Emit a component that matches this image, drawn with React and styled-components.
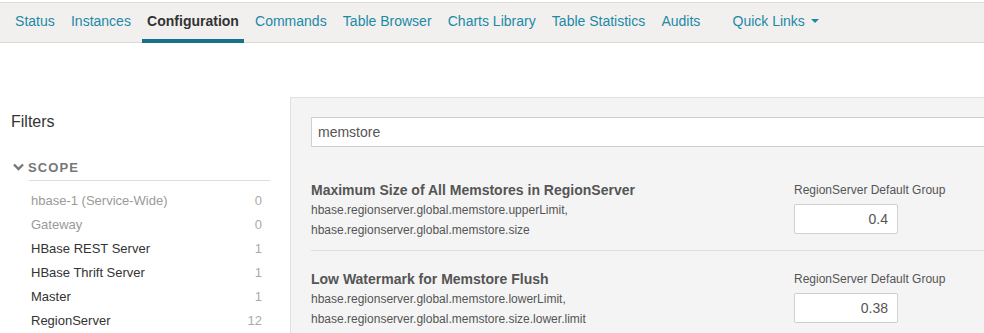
import React from "react";
import styled, { createGlobalStyle } from "styled-components";

const Global = createGlobalStyle`
  html, body { margin: 0; padding: 0; background: #fff; }
  body { font-family: "Liberation Sans", Arial, sans-serif; color: #333; }
  * { box-sizing: border-box; }
`;

const Page = styled.div`
  width: 984px;
  height: 333px;
  overflow: hidden;
  padding-top: 2px;
`;

const Nav = styled.nav`
  display: flex;
  align-items: stretch;
  height: 41px;
  background: #f2f0ef;
  border-top: 1px solid #dedcdb;
  border-bottom: 1px solid #dcdad9;
  padding-left: 7px;
`;

const Tab = styled.a`
  position: relative;
  display: flex;
  align-items: center;
  gap: 6px;
  padding: 0 8.1px 3px;
  margin-left: ${(p) => p.$offset || 0}px;
  font-size: 14px;
  color: ${(p) => (p.$active ? "#333" : "#1a8aa6")};
  font-weight: ${(p) => (p.$active ? 700 : 400)};
  text-decoration: none;
  white-space: nowrap;
  &::after {
    content: "";
    display: ${(p) => (p.$active ? "block" : "none")};
    position: absolute;
    left: 3px;
    right: 3px;
    bottom: -1px;
    height: 4px;
    background: #17718a;
  }
`;

const Body = styled.div`
  display: flex;
  margin-top: 54px;
`;

const Sidebar = styled.aside`
  width: 290px;
  flex: none;
  padding: 13px 20px 0 11px;
`;

const FiltersTitle = styled.h3`
  margin: 0;
  font-size: 16px;
  font-weight: 400;
  color: #333;
  line-height: 24px;
`;

const ScopeHeader = styled.div`
  display: flex;
  align-items: center;
  gap: 4px;
  margin-top: 21px;
  height: 24px;
  font-size: 13px;
  font-weight: 700;
  letter-spacing: 1.1px;
  color: #777;
  padding-left: 2px;
`;

const ScopeList = styled.ul`
  list-style: none;
  margin: 1px 0 0 18px;
  padding: 7px 0 0;
  border-top: 1px solid #ddd;
  width: 241px;
`;

const ScopeItem = styled.li`
  display: flex;
  justify-content: space-between;
  align-items: center;
  height: 24px;
  padding: 0 8px 0 2px;
  font-size: 13px;
  color: ${(p) => (p.$muted ? "#9a9a9a" : "#333")};
`;

const Count = styled.span`
  color: #aaa;
  font-size: 13px;
`;

const Main = styled.main`
  flex: 1;
  background: #f4f4f4;
  border-left: 1px solid #e0e0e0;
  border-top: 1px solid #e0e0e0;
  padding: 19px 0 0 20px;
  min-height: 240px;
`;

const Search = styled.div`
  height: 30px;
  background: #fff;
  border: 1px solid #d0d0d0;
  border-right: none;
  display: flex;
  align-items: center;
  padding-left: 6px;
  font-size: 14px;
  color: #555;
`;

const Rows = styled.div`
  margin-top: 15px;
`;

const Row = styled.div`
  display: flex;
  padding: 18px 0 10px;
  border-bottom: 1px solid #dedede;
`;

const Info = styled.div`
  width: 483px;
  flex: none;
`;

const Title = styled.div`
  font-size: 14px;
  font-weight: 700;
  color: #555;
  line-height: 20px;
`;

const Key = styled.div`
  font-size: 12px;
  color: #555;
  line-height: 20px;
`;

const GroupCol = styled.div`
  display: flex;
  flex-direction: column;
  align-items: flex-start;
`;

const GroupLabel = styled.div`
  font-size: 12px;
  color: #555;
  line-height: 20px;
`;

const ValueBox = styled.div`
  margin-top: 4px;
  width: 104px;
  height: 30px;
  background: #fff;
  border: 1px solid #d0d0d0;
  border-radius: 2px;
  display: flex;
  align-items: center;
  justify-content: flex-end;
  padding-right: 9px;
  font-size: 14px;
  color: #555;
`;

const tabs = [
  "Status",
  "Instances",
  "Configuration",
  "Commands",
  "Table Browser",
  "Charts Library",
  "Table Statistics",
  "Audits",
];

const scopes = [
  ["hbase-1 (Service-Wide)", 0, true],
  ["Gateway", 0, true],
  ["HBase REST Server", 1],
  ["HBase Thrift Server", 1],
  ["Master", 1],
  ["RegionServer", 12],
];

const configs = [
  {
    title: "Maximum Size of All Memstores in RegionServer",
    keys: [
      "hbase.regionserver.global.memstore.upperLimit,",
      "hbase.regionserver.global.memstore.size",
    ],
    value: "0.4",
  },
  {
    title: "Low Watermark for Memstore Flush",
    keys: [
      "hbase.regionserver.global.memstore.lowerLimit,",
      "hbase.regionserver.global.memstore.size.lower.limit",
    ],
    value: "0.38",
  },
];

const Chevron = () => (
  <svg width="11" height="8" viewBox="0 0 11 8">
    <path d="M1 1.5 L5.5 6 L10 1.5" fill="none" stroke="#777" strokeWidth="2.4" />
  </svg>
);

const Caret = () => (
  <svg width="8" height="4" viewBox="0 0 8 4">
    <path d="M0 0 L8 0 L4 4 Z" fill="#1a8aa6" />
  </svg>
);

export default function App() {
  return (
    <Page>
      <Global />
      <Nav>
        {tabs.map((t) => (
          <Tab key={t} $active={t === "Configuration"}>
            {t}
          </Tab>
        ))}
        <Tab $offset={16}>
          Quick Links <Caret />
        </Tab>
      </Nav>
      <Body>
        <Sidebar>
          <FiltersTitle>Filters</FiltersTitle>
          <ScopeHeader>
            <Chevron />
            SCOPE
          </ScopeHeader>
          <ScopeList>
            {scopes.map(([name, n, muted]) => (
              <ScopeItem key={name} $muted={muted}>
                <span>{name}</span>
                <Count>{n}</Count>
              </ScopeItem>
            ))}
          </ScopeList>
        </Sidebar>
        <Main>
          <Search>memstore</Search>
          <Rows>
            {configs.map((c) => (
              <Row key={c.title}>
                <Info>
                  <Title>{c.title}</Title>
                  {c.keys.map((k) => (
                    <Key key={k}>{k}</Key>
                  ))}
                </Info>
                <GroupCol>
                  <GroupLabel>RegionServer Default Group</GroupLabel>
                  <ValueBox>{c.value}</ValueBox>
                </GroupCol>
              </Row>
            ))}
          </Rows>
        </Main>
      </Body>
    </Page>
  );
}
